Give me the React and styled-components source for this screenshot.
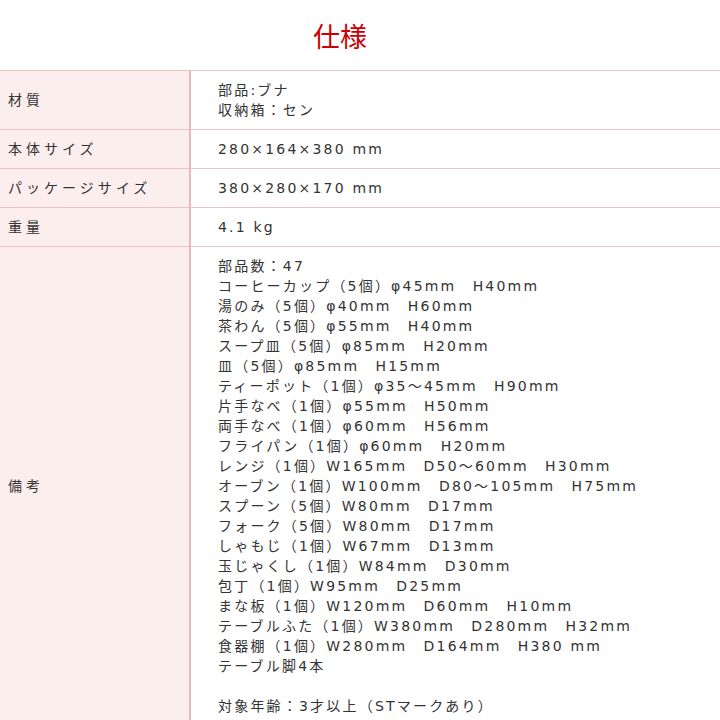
import React from "react";
import styled, { createGlobalStyle } from "styled-components";

const Global = createGlobalStyle`
  html, body { margin: 0; padding: 0; background: #fff; overflow: hidden; }
  body { font-family: "DejaVu Sans", "Noto Sans CJK JP", sans-serif; }
`;

const Title = styled.h2`
  margin: 0;
  height: 70px;
  padding-right: 40px;
  display: flex;
  align-items: center;
  justify-content: center;
  color: #cc0000;
  font-family: "Noto Sans CJK JP", sans-serif;
  font-size: 27px;
  font-weight: 400;
  line-height: 1;
`;

const Table = styled.table`
  width: 100%;
  border-collapse: collapse;
  border-top: 1px solid #e8c4c4;
  font-size: 14px;
  color: #333;
`;

const Th = styled.th`
  width: 190px;
  box-sizing: border-box;
  background: #fdeeee;
  border-bottom: 1px solid #e8c4c4;
  border-right: 2px solid #e2bcbc;
  text-align: left;
  font-weight: 400;
  line-height: 20px;
  padding: 9px 8px;
  letter-spacing: 4px;
  white-space: nowrap;
`;

const Td = styled.td`
  border-bottom: 1px solid #e8c4c4;
  padding: 9px 0 9px 27px;
  line-height: 20px;
  letter-spacing: 2.2px;
  white-space: pre;
`;

const rows = [
  ["材質", "部品:ブナ\n収納箱：セン"],
  ["本体サイズ", "280×164×380 mm"],
  ["パッケージサイズ", "380×280×170 mm"],
  ["重量", "4.1 kg"],
  [
    "備考",
    [
      "部品数：47",
      "コーヒーカップ（5個）φ45mm　H40mm",
      "湯のみ（5個）φ40mm　H60mm",
      "茶わん（5個）φ55mm　H40mm",
      "スープ皿（5個）φ85mm　H20mm",
      "皿（5個）φ85mm　H15mm",
      "ティーポット（1個）φ35～45mm　H90mm",
      "片手なべ（1個）φ55mm　H50mm",
      "両手なべ（1個）φ60mm　H56mm",
      "フライパン（1個）φ60mm　H20mm",
      "レンジ（1個）W165mm　D50～60mm　H30mm",
      "オーブン（1個）W100mm　D80～105mm　H75mm",
      "スプーン（5個）W80mm　D17mm",
      "フォーク（5個）W80mm　D17mm",
      "しゃもじ（1個）W67mm　D13mm",
      "玉じゃくし（1個）W84mm　D30mm",
      "包丁（1個）W95mm　D25mm",
      "まな板（1個）W120mm　D60mm　H10mm",
      "テーブルふた（1個）W380mm　D280mm　H32mm",
      "食器棚（1個）W280mm　D164mm　H380 mm",
      "テーブル脚4本",
      "",
      "対象年齢：3才以上（STマークあり）",
      "",
    ].join("\n"),
  ],
];

export default function App() {
  return (
    <>
      <Global />
      <Title>仕様</Title>
      <Table>
        <tbody>
          {rows.map(([k, v]) => (
            <tr key={k}>
              <Th>{k}</Th>
              <Td>{v}</Td>
            </tr>
          ))}
        </tbody>
      </Table>
    </>
  );
}
